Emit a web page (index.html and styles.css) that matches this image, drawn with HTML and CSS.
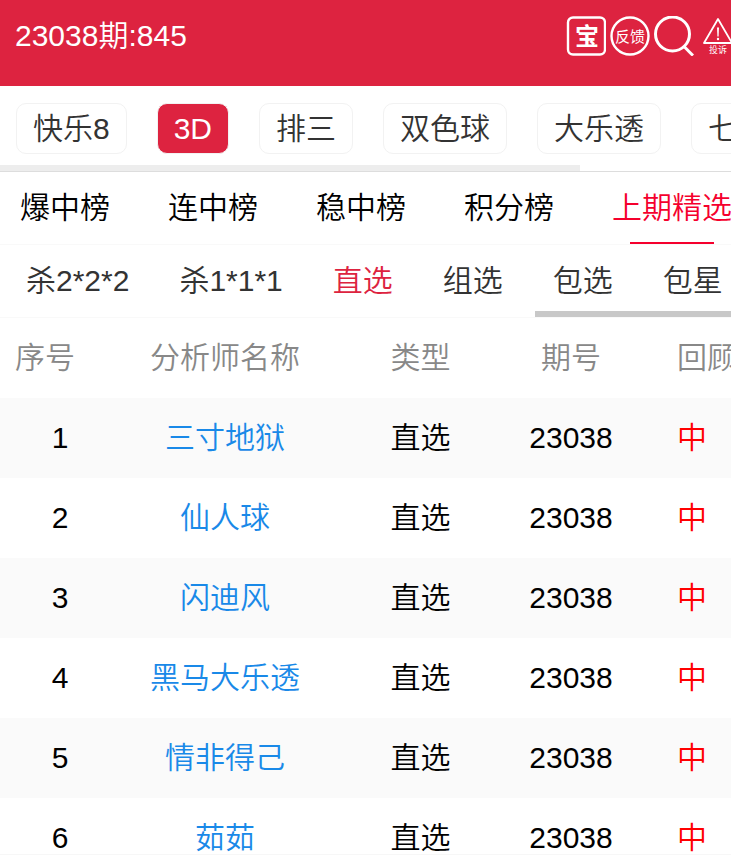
FILE: index.html
```html
<!DOCTYPE html>
<html lang="zh-CN">
<head>
    <meta charset="UTF-8">
    <meta name="viewport" content="width=device-width, initial-scale=1.0">
    <title>23038期:845</title>
    <link rel="stylesheet" href="styles.css">
</head>
<body>

    <header class="top-bar">
        <h1 class="issue">23038期:845</h1>
        <div class="top-icons">
            <a href="#" aria-label="宝">
                <svg width="40" height="40" viewBox="0 0 40 40">
                    <rect x="2" y="1.5" width="37" height="37" rx="5" class="line"/>
                    <text x="21" y="29" class="icon-text bold" font-size="24">宝</text>
                </svg>
            </a>
            <a href="#" aria-label="反馈">
                <svg width="40" height="40" viewBox="0 0 40 40">
                    <circle cx="20" cy="20" r="18.5" class="line"/>
                    <text x="20" y="26" class="icon-text" font-size="15">反馈</text>
                </svg>
            </a>
            <a href="#" aria-label="搜索">
                <svg width="40" height="40" viewBox="0 0 40 40">
                    <circle cx="18.5" cy="18" r="17" class="line thick"/>
                    <path d="M30 30.5L39 39.5" class="line thick"/>
                </svg>
            </a>
            <a href="#" class="complain" aria-label="投诉">
                <svg width="30" height="40" viewBox="0 0 30 40">
                    <path d="M15 3L29 27H1Z" class="line thin"/>
                    <path d="M14 11.5h2l-.4 9h-1.2z" fill="#fff"/>
                    <circle cx="15" cy="23" r="1.2" fill="#fff"/>
                    <text x="15" y="37" class="icon-text" font-size="9">投诉</text>
                </svg>
            </a>
        </div>
    </header>

    <!-- Lottery types -->
    <nav class="games">
        <div class="games-list">
            <button>快乐8</button>
            <button class="active">3D</button>
            <button>排三</button>
            <button>双色球</button>
            <button>大乐透</button>
            <button>七星彩</button>
        </div>
        <div class="scroll-thumb"></div>
    </nav>

    <!-- Rankings -->
    <nav class="ranks">
        <a href="#">爆中榜</a>
        <a href="#">连中榜</a>
        <a href="#">稳中榜</a>
        <a href="#">积分榜</a>
        <a href="#" class="active">上期精选</a>
    </nav>

    <!-- Play types -->
    <nav class="plays">
        <div class="plays-list">
            <a href="#">杀2*2*2</a>
            <a href="#">杀1*1*1</a>
            <a href="#" class="active">直选</a>
            <a href="#">组选</a>
            <a href="#">包选</a>
            <a href="#">包星</a>
        </div>
        <div class="scroll-thumb"></div>
    </nav>

    <main class="list">
        <table>
            <colgroup>
                <col class="col-no">
                <col class="col-name">
                <col class="col-type">
                <col class="col-issue">
                <col>
            </colgroup>
            <thead>
                <tr><th>序号</th><th>分析师名称</th><th>类型</th><th>期号</th><th>回顾</th></tr>
            </thead>
            <tbody>
                <tr><td>1</td><td><a href="#">三寸地狱</a></td><td>直选</td><td>23038</td><td>中</td></tr>
                <tr><td>2</td><td><a href="#">仙人球</a></td><td>直选</td><td>23038</td><td>中</td></tr>
                <tr><td>3</td><td><a href="#">闪迪风</a></td><td>直选</td><td>23038</td><td>中</td></tr>
                <tr><td>4</td><td><a href="#">黑马大乐透</a></td><td>直选</td><td>23038</td><td>中</td></tr>
                <tr><td>5</td><td><a href="#">情非得己</a></td><td>直选</td><td>23038</td><td>中</td></tr>
                <tr><td>6</td><td><a href="#">茹茹</a></td><td>直选</td><td>23038</td><td>中</td></tr>
            </tbody>
        </table>
    </main>

    <footer class="bottom-bar"></footer>

</body>
</html>
```

FILE: styles.css
```css
* {
    box-sizing: border-box;
}

body {
    margin: 0;
    height: 100vh;
    display: flex;
    flex-direction: column;
    overflow: hidden;
    background-color: #fff;
    color: #000;
    font-family: "Liberation Sans", "Noto Sans CJK SC", sans-serif;
    font-size: 30px;
    font-weight: 350;
    line-height: 40px;
    white-space: nowrap;
}

a {
    color: inherit;
    text-decoration: none;
}

/* Header */
.top-bar {
    flex: none;
    display: flex;
    justify-content: space-between;
    height: 86px;
    padding: 16px 0 0 15px;
    background-color: #dd2340;
    color: #fff;
}

.issue {
    margin: 0;
    font-size: 30px;
    font-weight: 350;
}

.top-icons {
    display: flex;
    gap: 4px;
}

.top-icons svg {
    display: block;
}

.complain {
    margin: 0 -2px 0 5px;
}

.line {
    fill: none;
    stroke: #fff;
    stroke-width: 2.4;
}

.thick {
    stroke-width: 3;
}

.thin {
    stroke-width: 1.8;
    stroke-linejoin: round;
}

.icon-text {
    fill: #fff;
    text-anchor: middle;
    font-weight: 400;
}

.bold {
    font-weight: 700;
}

/* Lottery types */
.games {
    flex: none;
    height: 86px;
    padding-top: 17px;
    border-bottom: 1px solid #ddd;
    display: flex;
    flex-direction: column;
    justify-content: space-between;
}

.games-list {
    display: flex;
    gap: 30px;
    padding-left: 16px;
}

.games button {
    flex: none;
    height: 51px;
    padding: 0 16px;
    border: 1px solid #f2f2f2;
    border-radius: 10px;
    background-color: #fff;
    color: #333;
    font: inherit;
}

.games .active {
    background-color: #dd2340;
    color: #fff;
}

.scroll-thumb {
    height: 6px;
}

.games .scroll-thumb {
    width: 580px;
    background-color: #ededed;
}

/* Rankings */
.ranks {
    flex: none;
    display: flex;
    gap: 58px;
    height: 73px;
    padding-left: 20px;
    border-bottom: 1px solid #f9f9f9;
    line-height: 72px;
}

.ranks .active {
    position: relative;
    color: #f5002d;
}

.ranks .active::after {
    content: "";
    position: absolute;
    left: 15%;
    bottom: 0;
    width: 70%;
    height: 2px;
    background-color: #f5002d;
}

/* Play types */
.plays {
    flex: none;
    display: flex;
    flex-direction: column;
    justify-content: space-between;
    height: 73px;
    border-bottom: 1px solid #f9f9f9;
    color: #333;
}

.plays-list {
    display: flex;
    gap: 50px;
    padding: 16px 0 0 26px;
}

.plays .active {
    color: #dd2340;
}

.plays .scroll-thumb {
    margin-left: 535px;
    background-color: #c8c8c8;
}

/* Analyst table */
.list {
    flex: 1;
    min-height: 0;
    overflow: hidden;
}

table {
    width: 100%;
    table-layout: fixed;
    border-collapse: collapse;
}

.col-no {
    width: 120px;
}

.col-name {
    width: 210px;
}

.col-type {
    width: 181px;
}

.col-issue {
    width: 120px;
}

th,
td {
    height: 80px;
    padding: 0;
    font-weight: 350;
    text-align: center;
}

th {
    color: #888;
}

th:first-child {
    padding-left: 15px;
    text-align: left;
}

th:last-child,
td:last-child {
    padding-left: 46px;
    text-align: left;
}

td:last-child {
    color: #f00;
}

td a {
    color: #1989e8;
}

tbody tr:nth-child(odd) {
    background-color: #fafafa;
}

.bottom-bar {
    flex: none;
    height: 13px;
    border-top: 1px solid #f7f7f7;
    background-color: #fff;
}
```
